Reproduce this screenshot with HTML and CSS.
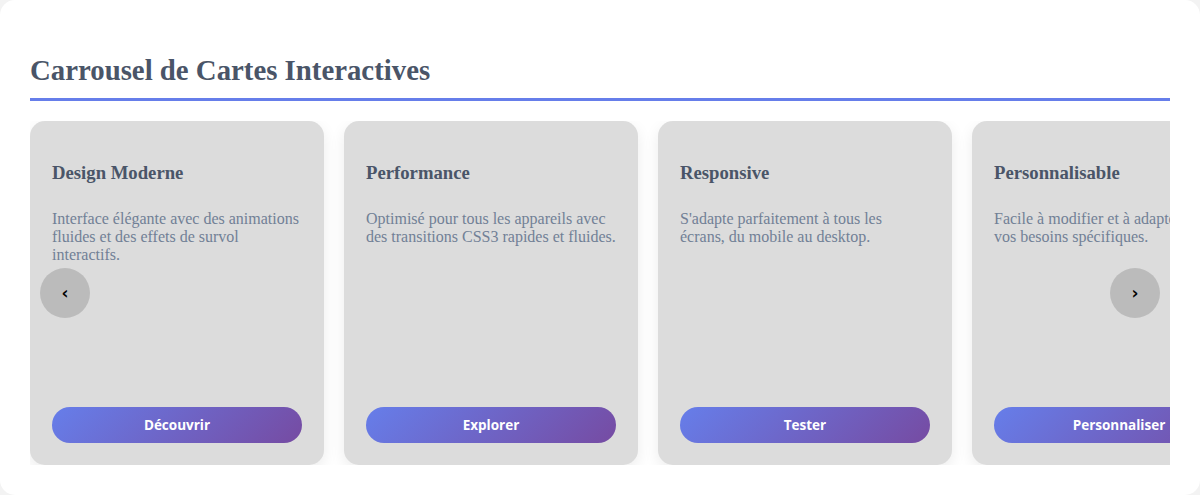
FILE: index.html
```html
<!DOCTYPE html>
<html lang="fr">
<head>
    <meta charset="UTF-8">
    <title>Carrousel de Cartes</title>
    <link rel="stylesheet" href="styles.css">
</head>
<body>
<div class="container">
    <h2 class="title">Carrousel de Cartes Interactives</h2>

    <div class="carousel">
        <div class="track">
            <div class="card">
                <h3>Design Moderne</h3>
                <p>Interface élégante avec des animations fluides et des effets de survol interactifs.</p>
                <button class="card-btn">Découvrir</button>
            </div>
            <div class="card">
                <h3>Performance</h3>
                <p>Optimisé pour tous les appareils avec des transitions CSS3 rapides et fluides.</p>
                <button class="card-btn">Explorer</button>
            </div>
            <div class="card">
                <h3>Responsive</h3>
                <p>S'adapte parfaitement à tous les écrans, du mobile au desktop.</p>
                <button class="card-btn">Tester</button>
            </div>
            <div class="card">
                <h3>Personnalisable</h3>
                <p>Facile à modifier et à adapter selon vos besoins spécifiques.</p>
                <button class="card-btn">Personnaliser</button>
            </div>
        </div>
        <button class="nav prev">&lsaquo;</button>
        <button class="nav next">&rsaquo;</button>
    </div>
</div>
</body>
</html>
```

FILE: styles.css
```css
html, body {margin: 0; padding: 0;}
body {background: #f3f3f3; font-family: "Liberation Serif", "Times New Roman", serif;}

.container {background: #fff; border-radius: 15px; padding: 30px; height: 495px; box-sizing: border-box;}

/* heading */
.title {margin: 24px 0 20px; padding-bottom: 11px; font-size: 28.8px; color: #4a5568;
    border-bottom: 3px solid #667eea;}

/* carousel */
.carousel {position: relative; overflow: hidden;}
.track {display: flex; gap: 20px;}
.card {flex: 0 0 294px; height: 344px; box-sizing: border-box; padding: 22px; background: #dcdcdc;
    border-radius: 15px; box-shadow: 0 5px 15px rgba(0,0,0,0.08); display: flex; flex-direction: column;}
.card h3 {margin: 19px 0 26px; font-size: 18.72px; color: #4a5568;}
.card p {margin: 0; font-size: 16px; color: #718096;}

.card-btn {margin-top: auto; height: 36px; border: none; border-radius: 18px; color: #fff;
    background: linear-gradient(135deg, #667eea 0%, #764ba2 100%);
    font-family: "Open Sans", sans-serif; font-weight: 700; font-size: 13.5px; cursor: pointer;}

.nav {position: absolute; top: 50%; margin-top: -25px; width: 50px; height: 50px; border: none; border-radius: 50%;
    background: rgba(0,0,0,0.15); color: #000; font-family: "DejaVu Sans", sans-serif; font-weight: 700;
    font-size: 17px; line-height: 50px; padding: 0; text-align: center; cursor: pointer;}
.prev {left: 10px;}
.next {right: 10px;}
```
